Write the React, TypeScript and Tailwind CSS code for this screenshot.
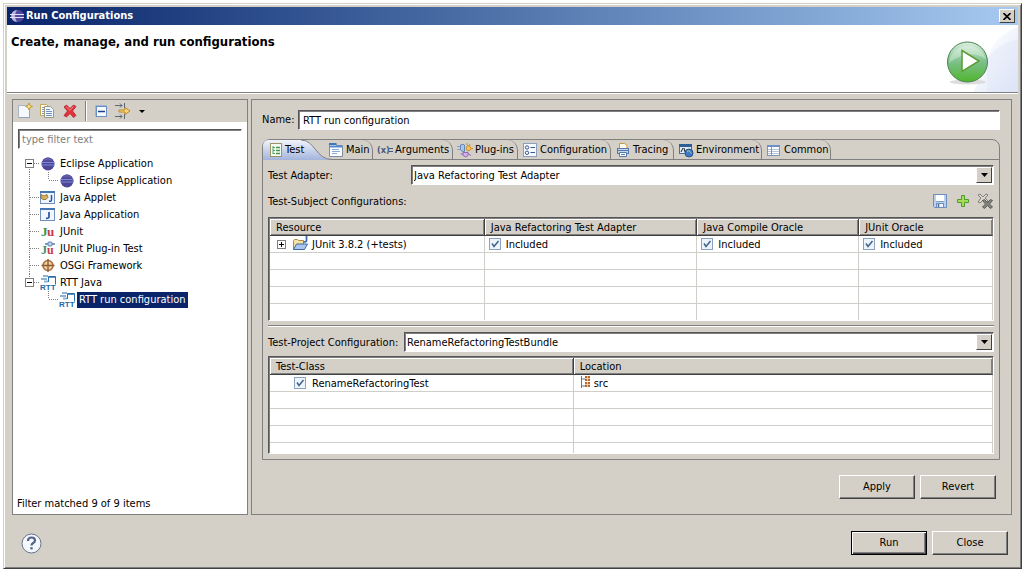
import { useState, type ReactNode } from "react";
import clsx from "clsx";

function Icon({ children }: { children: ReactNode }) {
  return (
    <svg width="16" height="16" viewBox="0 0 16 16" className="shrink-0" aria-hidden="true">
      {children}
    </svg>
  );
}

/* ---------- toolbar icons ---------- */

const NewIcon = () => (
  <Icon>
    <path d="M1.500 2.500h8l3 3v9h-11z" fill="#f4f8fd" stroke="#a8b4c4" />
    <path d="M2 14.500h10.500v-7" fill="none" stroke="#8fa3bd" />
    <path d="M12 0l1 2.500 2.500 1-2.500 1L12 7l-1-2.500-2.500-1 2.500-1z" fill="#fbe38a" stroke="#b98a1e" strokeWidth=".8" />
  </Icon>
);

const DuplicateIcon = () => (
  <Icon>
    <path d="M1.500 1.500h6l2 2v9h-8z" fill="#fffdf2" stroke="#c3a755" />
    <path d="M3 4.500h2M3 6.500h2M3 8.500h2M3 10.500h2" stroke="#7e9cc8" />
    <path d="M5.500 3.500h6l3 3v8h-9z" fill="#f3f7ff" stroke="#9a9a80" />
    <path d="M7 6.500h4M7 8.500h6M7 10.500h6M7 12.500h6" stroke="#6f93c9" />
  </Icon>
);

const DeleteIcon = () => (
  <Icon>
    <path d="M2 4l2.500-2L8 5.500 11.500 2 14 3.500 10.500 8l3.500 4.500-2.500 2L8 10.500 4.500 14 2 12.500 5.500 8z" fill="#e2323c" stroke="#b5202b" strokeWidth=".8" />
    <path d="M4 3.500L8 7.300l3.500-3.800" fill="none" stroke="#f58b8b" />
  </Icon>
);

const CollapseIcon = () => (
  <Icon>
    <path d="M2.500 13.500v-11h11" fill="none" stroke="#9db5d8" />
    <rect x="3.500" y="3.500" width="10" height="10" fill="#f6faff" stroke="#6b8fc4" />
    <path d="M5 8.500h7" stroke="#1f3f86" strokeWidth="1.500" />
  </Icon>
);

const FilterIcon = () => (
  <Icon>
    <path d="M0 2.500h7M0 13.500h7M5 .5l2 2-2 2M5 11.500l2 2-2 2" fill="none" stroke="#5c6670" />
    <path d="M9.500 0v5M9.500 11v5" stroke="#5c6670" />
    <path d="M4 7h6V4.500l5 3.500-5 3.500V9H4z" fill="#fbd77c" stroke="#c08a22" />
  </Icon>
);

const SaveIcon = () => (
  <Icon>
    <path d="M1.500 1.500h13v13h-12l-1-1z" fill="#b9cfeb" stroke="#6d8fbd" />
    <rect x="4" y="2" width="8" height="6" fill="#fff" />
    <path d="M4 8.500h8" stroke="#7f9cc6" />
    <rect x="4.500" y="10.500" width="7" height="4" fill="#eef3fa" stroke="#6d8fbd" />
    <path d="M6.500 11v3" stroke="#4c6b98" strokeWidth="1.500" />
  </Icon>
);

const AddIcon = () => (
  <Icon>
    <path d="M6.500 2.500h3v4h4v3h-4v4h-3v-4h-4v-3h4z" fill="#a5dc5a" stroke="#4f9a2b" />
  </Icon>
);

const RemoveAllIcon = () => (
  <Icon>
    <path d="M1 2l2-1 3 3 3-3 2 1-3 3 3 3-2 2-3-3-3 3-2-1 3-4z" fill="#dcd9d2" stroke="#77756f" strokeWidth=".9" />
    <path d="M5.500 7.500l2-1 3 3 3-3 2 1-3 3.500 3 3-2 1.500-3-3-3 3-2-1.500 3-3z" fill="#85837d" stroke="#55534e" strokeWidth=".9" />
  </Icon>
);

/* ---------- tree icons ---------- */

const EclipseIcon = () => (
  <Icon>
    <circle cx="8" cy="8" r="6.500" fill="#4d4596" />
    <path d="M1.500 6.500h13M1.500 9h13" stroke="#8494dc" strokeWidth=".9" />
    <path d="M2.500 4.500a6.500 6.500 0 0 1 11 0z" fill="#625aa6" />
  </Icon>
);

const AppletIcon = () => (
  <Icon>
    <rect x=".5" y="1.500" width="14" height="12" fill="#eef5ff" stroke="#7190bd" />
    <path d="M0 2h15" stroke="#4475b4" strokeWidth="2" />
    <path d="M1 4.500l3 1.500 3-1.500 1 3-2 2H3L1 8z" fill="#d8b35a" stroke="#86652a" strokeWidth=".8" />
    <path d="M11.500 5v5q0 1.500-2.500 1.300" fill="none" stroke="#28559b" strokeWidth="1.500" />
  </Icon>
);

const JavaAppIcon = () => (
  <Icon>
    <rect x=".5" y="1.500" width="14" height="12" fill="#f2f7ff" stroke="#7190bd" />
    <path d="M0 2h15" stroke="#4475b4" strokeWidth="2" />
    <path d="M9 5v5q0 1.500-3 1.300" fill="none" stroke="#28559b" strokeWidth="1.700" />
  </Icon>
);

const JUnitIcon = () => (
  <Icon>
    <text x="1" y="12" fontSize="13" fontWeight="bold" fontFamily="Liberation Serif, serif" fill="#3c8f55">J</text>
    <text x="7" y="12" fontSize="13" fontWeight="bold" fontFamily="Liberation Serif, serif" fill="#c8384c">u</text>
  </Icon>
);

const JUnitPluginIcon = () => (
  <Icon>
    <text x="1" y="13" fontSize="12" fontWeight="bold" fontFamily="Liberation Serif, serif" fill="#3c8f55">J</text>
    <text x="7" y="13" fontSize="12" fontWeight="bold" fontFamily="Liberation Serif, serif" fill="#c8384c">u</text>
    <path d="M5 3h3M12 3h3" stroke="#5a7fb0" strokeWidth="1.500" />
    <rect x="8" y="1" width="4" height="4" rx="1" fill="#c3d5ea" stroke="#5a7fb0" />
  </Icon>
);

const OsgiIcon = () => (
  <Icon>
    <circle cx="8" cy="7.500" r="5" fill="#f3cfa0" stroke="#a86f3c" strokeWidth="1.500" />
    <path d="M8 1v13M1.500 7.500h13" stroke="#8a5a30" strokeWidth="1.300" />
  </Icon>
);

const RttIcon = () => (
  <Icon>
    <path d="M3 1h5M1 4h6M4 6.500h4" stroke="#8db2d6" strokeWidth="2" />
    <path d="M8.500 7V1.500h7v8" fill="#fff" stroke="#2a6ea8" />
    <path d="M9 2h6" stroke="#2a6ea8" strokeWidth="1.500" />
    <text x="0" y="15" fontSize="8" fontWeight="bold" fontFamily="Liberation Sans, sans-serif" fill="#1d6aa8">RTT</text>
  </Icon>
);

/* ---------- tab icons ---------- */

const TestIcon = () => (
  <Icon>
    <rect x="2.500" y="1.500" width="11" height="13" fill="#f7fbf1" stroke="#9b9465" />
    <path d="M5 4v8M5 5.500h2M5 8.500h2M5 11.500h2" stroke="#51a262" />
    <path d="M8 5.500h4M8 8.500h4M8 11.500h4" stroke="#3f9c54" strokeWidth="1.500" />
  </Icon>
);

const MainIcon = () => (
  <Icon>
    <path d="M1.500 14.500v-13h7v2h6v11z" fill="#fbfdff" stroke="#7c8da8" />
    <path d="M1 2h7" stroke="#3f76b8" strokeWidth="2" />
    <path d="M2 4.500h12" stroke="#4f8ad0" strokeWidth="2" />
    <path d="M4 7.500h7M4 9.500h8M4 11.500h5" stroke="#8aa9d2" />
  </Icon>
);

const ArgumentsIcon = () => (
  <Icon>
    <text x="0" y="11" fontSize="9" fontWeight="bold" fontFamily="DejaVu Sans Condensed, sans-serif" fill="#45597a">(x)</text>
    <path d="M12 6.500h4M12 9.500h4" stroke="#45597a" />
  </Icon>
);

const PluginsIcon = () => (
  <Icon>
    <path d="M0 4.500h4M0 7.500h4" stroke="#7da2d4" />
    <path d="M3.500 3q3-1.500 4 0v6.500q-3 0-4-1.500z" fill="#aac6e8" stroke="#6288bb" />
    <path d="M10.500 3.500q3 0 3.500 3-.5 2.500-3.500 2.500l-1.500-3z" fill="#f6c65a" stroke="#c98c28" />
    <path d="M10 1v2M13 2l-1 2M14 6.500h2" stroke="#c98c28" />
    <path d="M6 10.500h5v3l-2 1.500-3-1.500zM3.500 12H6M11 11.500l3 2" fill="#d5b3e6" stroke="#8f66b8" />
  </Icon>
);

const ConfigurationIcon = () => (
  <Icon>
    <rect x="1.500" y="1.500" width="13" height="13" fill="#f6f9ff" stroke="#8d9fc0" />
    <circle cx="5" cy="5.500" r="1.700" fill="none" stroke="#3c5890" />
    <circle cx="5" cy="10.800" r="1.700" fill="none" stroke="#3c5890" />
    <path d="M8.500 5.500H13M8.500 10.500H13" stroke="#3c5890" />
  </Icon>
);

const TracingIcon = () => (
  <Icon>
    <path d="M4.500 7V1.500h5l2.500 2V7" fill="#fffaea" stroke="#c9973c" />
    <rect x="2.500" y="6.500" width="11" height="5" fill="#c5d7ee" stroke="#5679ab" />
    <path d="M4.500 10.500h7v4h-7z" fill="#fff" stroke="#5679ab" />
    <path d="M6 12.500h4M3 8.500h10" stroke="#5679ab" />
  </Icon>
);

const EnvironmentIcon = () => (
  <Icon>
    <rect x="1.500" y="2.500" width="12" height="9" fill="#dce9f7" stroke="#456c9d" />
    <path d="M1 3.500h13" stroke="#2f5d96" strokeWidth="3" />
    <path d="M3 10l2-4M6 6l1 4" stroke="#222" />
    <circle cx="11" cy="11" r="4" fill="#3f7ac4" stroke="#27508c" />
    <path d="M9 9.500q2-1.500 3 0t1.500 2" fill="none" stroke="#a9d08a" />
  </Icon>
);

const CommonIcon = () => (
  <Icon>
    <rect x="1.500" y="3.500" width="12" height="10" fill="#fff" stroke="#7d93b8" />
    <path d="M1 4h13" stroke="#6c91c9" strokeWidth="2" />
    <path d="M2 7.500h11M2 9.500h11M2 11.500h11" stroke="#b3c3dc" />
    <path d="M5.500 5v8" stroke="#7d93b8" />
  </Icon>
);

/* ---------- table icons ---------- */

const ProjectIcon = () => (
  <Icon>
    <path d="M1.500 13.500v-9l1-1h3l1 1h5v4" fill="#f8dfa2" stroke="#b08c42" />
    <path d="M1.500 13.500l3-5.500h11l-3 5.500z" fill="#a9c7ef" stroke="#41699f" />
    <path d="M14.500 0v4.500q0 1.500-3 1.500" fill="none" stroke="#3a6ba8" strokeWidth="1.700" />
  </Icon>
);

const SourceFolderIcon = () => (
  <svg width="12" height="16" viewBox="0 0 12 16" className="shrink-0" aria-hidden="true">
    <path d="M1.500 1v12M1 4h4M1 11h4" stroke="#66788c" fill="none" />
    <rect x="5" y="1" width="5" height="5" fill="#b56a2a" />
    <rect x="5" y="7" width="5" height="5" fill="#b56a2a" />
    <path d="M5 3.500h5M7.500 1v5M5 9.500h5M7.500 7v5" stroke="#f7dcb6" strokeWidth=".8" />
  </svg>
);

function Expander({ open, label, onClick }: { open: boolean; label: string; onClick?: () => void }) {
  return (
    <button aria-label={label} aria-expanded={open} onClick={onClick} className="block size-[9px] shrink-0 border border-[#808080] bg-white">
      <svg width="7" height="7" viewBox="0 0 7 7" aria-hidden="true">
        <path d={open ? "M1 3.500h5" : "M1 3.500h5M3.500 1v5"} stroke="#000" />
      </svg>
    </button>
  );
}

type TreeItem = { label: string; icon: () => ReactNode; children?: TreeItem[] };

const tree: TreeItem[] = [
  { label: "Eclipse Application", icon: EclipseIcon, children: [{ label: "Eclipse Application", icon: EclipseIcon }] },
  { label: "Java Applet", icon: AppletIcon },
  { label: "Java Application", icon: JavaAppIcon },
  { label: "JUnit", icon: JUnitIcon },
  { label: "JUnit Plug-in Test", icon: JUnitPluginIcon },
  { label: "OSGi Framework", icon: OsgiIcon },
  { label: "RTT Java", icon: RttIcon, children: [{ label: "RTT run configuration", icon: RttIcon }] },
];

function TreeLines({ d, wide }: { d: string; wide?: boolean }) {
  return (
    <svg width={wide ? 40 : 21} height="17" className="shrink-0" aria-hidden="true">
      <path d={d} fill="none" stroke="#808080" strokeDasharray="1 1" />
    </svg>
  );
}

function TreeLabel({ item, selected }: { item: TreeItem; selected?: boolean }) {
  return (
    <>
      <item.icon />
      <span className={clsx("ml-[2px] px-[2px] leading-4", selected && "bg-[#0a246a] text-white")}>{item.label}</span>
    </>
  );
}

function ConfigTree() {
  const [closed, setClosed] = useState<string[]>([]);
  const toggle = (label: string) =>
    setClosed(closed.includes(label) ? closed.filter((c) => c !== label) : [...closed, label]);

  return (
    <ul className="mt-[6px] ml-[6px]">
      {tree.map((item, i) => {
        const first = i === 0;
        const last = i === tree.length - 1;
        const open = !closed.includes(item.label);
        return (
          <li key={item.label}>
            <div className="relative flex h-[17px] items-center whitespace-nowrap">
              <TreeLines d={`M10.500 ${first ? 8 : 0}V${last ? 8 : 17}M11 8.500H21`} />
              <TreeLabel item={item} />
              {item.children && (
                <span className="absolute top-1 left-[6px]">
                  <Expander open={open} label={item.label} onClick={() => toggle(item.label)} />
                </span>
              )}
            </div>
            {item.children && open && (
              <ul>
                {item.children.map((child) => (
                  <li key={child.label} className="flex h-[17px] items-center whitespace-nowrap">
                    <TreeLines wide d={`${last ? "" : "M10.500 0V17"}M29.500 0V8M30 8.500H40`} />
                    <TreeLabel item={child} selected={last} />
                  </li>
                ))}
              </ul>
            )}
          </li>
        );
      })}
    </ul>
  );
}

const sunken = "border border-t-[#555] border-l-[#555] border-r-white border-b-white shadow-[inset_1px_1px_0_#808080]";

function ComboBox({ id, value, className }: { id: string; value: string; className: string }) {
  return (
    <div className={clsx("relative flex h-5 bg-white", sunken, className)}>
      <select id={id} className="w-full appearance-none bg-transparent pt-[2px] pr-5 pl-[2px] outline-none">
        <option>{value}</option>
      </select>
      <span className="pointer-events-none absolute top-px right-px flex h-4 w-4 items-center justify-center border border-t-white border-l-white border-r-[#404040] border-b-[#404040] bg-[#d4d0c8]">
        <svg width="7" height="4" aria-hidden="true">
          <path d="M0 0h7L3.500 4z" />
        </svg>
      </span>
    </div>
  );
}

function Check({ label }: { label: string }) {
  return (
    <span className="relative block size-3 shrink-0">
      <input type="checkbox" defaultChecked aria-label={label} className="peer block size-3 appearance-none border border-[#8aa2bd] bg-[#eef4fb]" />
      <svg width="12" height="12" className="pointer-events-none absolute inset-0 hidden peer-checked:block" aria-hidden="true">
        <path d="M3 5.500l2 3 4.500-5.500" fill="none" stroke="#3f628c" strokeWidth="1.500" />
      </svg>
    </span>
  );
}

function Button({ children, primary }: { children: ReactNode; primary?: boolean }) {
  return (
    <button
      className={clsx(
        "h-6 w-[76px] border bg-[#d4d0c8]",
        primary
          ? "border-black shadow-[inset_1px_1px_0_#fff,inset_-1px_-1px_0_#404040,inset_-2px_-2px_0_#808080]"
          : "border-t-white border-l-white border-r-[#404040] border-b-[#404040] shadow-[inset_-1px_-1px_0_#808080]"
      )}
    >
      {children}
    </button>
  );
}

const th =
  "h-[17px] border-r border-r-[#404040] border-b border-b-[#404040] bg-[#d4d0c8] pt-px pb-0 pl-[6px] text-left leading-[15px] font-normal shadow-[inset_1px_1px_0_#fff,inset_-1px_-1px_0_#808080] last:border-r-[#808080]";
const td = "h-[17px] border-r border-b border-[#d0cec8] p-0";

function EmptyRows({ cols, lastHeight }: { cols: number; lastHeight: string }) {
  return (
    <>
      {[0, 1, 2, 3].map((row) => (
        <tr key={row}>
          {Array.from({ length: cols }, (_, c) => (
            <td key={c} className={row === 3 ? `border-r border-[#d0cec8] p-0 ${lastHeight}` : td} />
          ))}
        </tr>
      ))}
    </>
  );
}

function SubjectTable() {
  const oracles = ["Java Refactoring Test Adapter", "Java Compile Oracle", "JUnit Oracle"];
  return (
    <div className={clsx("bg-white pt-px pl-px", sunken)}>
      <table className="w-full table-fixed border-separate border-spacing-0 whitespace-nowrap">
        <colgroup>
          <col className="w-[29.7%]" />
          <col className="w-[29.4%]" />
          <col className="w-[22.4%]" />
          <col />
        </colgroup>
        <thead>
          <tr>
            <th className={th}>Resource</th>
            {oracles.map((o) => (
              <th key={o} className={th}>{o}</th>
            ))}
          </tr>
        </thead>
        <tbody>
          <tr>
            <td className={td}>
              <div className="flex h-4 items-center pl-[7px]">
                <Expander open={false} label="JUnit 3.8.2" />
                <span className="mr-1 ml-[6px]">
                  <ProjectIcon />
                </span>
                <span className="pt-[2px]">JUnit 3.8.2 (+tests)</span>
              </div>
            </td>
            {oracles.map((o) => (
              <td key={o} className={td}>
                <div className="flex h-4 items-center gap-[5px] pl-1">
                  <Check label={o} />
                  <span className="pt-[2px]">Included</span>
                </div>
              </td>
            ))}
          </tr>
          <EmptyRows cols={4} lastHeight="h-4" />
        </tbody>
      </table>
    </div>
  );
}

function ClassTable() {
  return (
    <div className={clsx("bg-white pt-px pl-px", sunken)}>
      <table className="w-full table-fixed border-separate border-spacing-0 whitespace-nowrap">
        <colgroup>
          <col className="w-[42%]" />
          <col />
        </colgroup>
        <thead>
          <tr>
            <th className={th}>Test-Class</th>
            <th className={th}>Location</th>
          </tr>
        </thead>
        <tbody>
          <tr>
            <td className={td}>
              <div className="flex h-4 items-center gap-[6px] pl-6">
                <Check label="RenameRefactoringTest" />
                <span className="pt-[2px]">RenameRefactoringTest</span>
              </div>
            </td>
            <td className={td}>
              <div className="flex h-4 items-center gap-[2px] pl-[6px]">
                <SourceFolderIcon />
                <span className="pt-[2px]">src</span>
              </div>
            </td>
          </tr>
          <EmptyRows cols={2} lastHeight="h-[10px]" />
        </tbody>
      </table>
    </div>
  );
}

const tabs = [
  { label: "Main", icon: MainIcon, width: "w-[49px]" },
  { label: "Arguments", icon: ArgumentsIcon, width: "w-20" },
  { label: "Plug-ins", icon: PluginsIcon, width: "w-[65px]" },
  { label: "Configuration", icon: ConfigurationIcon, width: "w-[93px]" },
  { label: "Tracing", icon: TracingIcon, width: "w-[63px]" },
  { label: "Environment", icon: EnvironmentIcon, width: "w-[88px]" },
  { label: "Common", icon: CommonIcon, width: "w-[69px]" },
];

function TabStrip() {
  return (
    <div role="tablist" className="flex h-5 border-b border-[#808080] whitespace-nowrap">
      <button role="tab" aria-selected="true" className="relative -mb-px flex w-[61px] shrink-0 items-center gap-px pl-[5px]">
        <svg width="72" height="20" className="absolute top-0 left-0" aria-hidden="true">
          <defs>
            <linearGradient id="tabfill" x1="0" y1="0" x2="0" y2="1">
              <stop offset="0" stopColor="#f2f4fa" />
              <stop offset="1" stopColor="#a3b4dc" />
            </linearGradient>
          </defs>
          <path d="M0 20V5Q1 0 6 0H38C52 0 53 19.500 69 19.500V20z" fill="url(#tabfill)" />
          <path d="M38 0C52 0 53 19.500 69 19.500" fill="none" stroke="#808080" />
        </svg>
        <span className="relative">
          <TestIcon />
        </span>
        <span className="relative">Test</span>
      </button>
      {tabs.map((t) => (
        <button
          key={t.label}
          role="tab"
          aria-selected="false"
          className={clsx("relative flex shrink-0 items-center gap-[2px] rounded-tr-[10px] border-r border-[#808080] pt-px pl-1", t.width)}
        >
          <t.icon />
          {t.label}
        </button>
      ))}
    </div>
  );
}

function HeaderArt() {
  return (
    <svg width="75" height="67" className="shrink-0" aria-hidden="true">
      <defs>
        <linearGradient id="corner" x1="0" y1="0" x2="1" y2="1">
          <stop offset="0.200" stopColor="#fff" />
          <stop offset="1" stopColor="#dbe3f7" />
        </linearGradient>
        <linearGradient id="ball" x1="0" y1="0" x2="0" y2="1">
          <stop offset="0" stopColor="#d9efdd" />
          <stop offset="0.500" stopColor="#7cc08a" />
          <stop offset="1" stopColor="#4fb52c" />
        </linearGradient>
      </defs>
      <path d="M75 2Q52 10 46 30T30 67H75z" fill="url(#corner)" />
      <path d="M75 14Q55 18 44 34V67H75z" fill="#dfe6f8" opacity=".4" />
      <ellipse cx="25" cy="57" rx="18" ry="2.500" fill="#dcdcdc" />
      <circle cx="24.500" cy="37" r="20" fill="url(#ball)" stroke="#4d8456" />
      <path d="M6 38Q25 23 43 34A19 19 0 0 0 6 38z" fill="#fff" opacity=".3" />
      <path d="M19 25.500L36 36 19 46.500z" fill="#fff" stroke="#5d9b35" strokeWidth="1.500" />
    </svg>
  );
}

export default function App() {
  return (
    <div className="flex min-h-screen flex-col bg-white p-[3px] font-['DejaVu_Sans_Condensed','DejaVu_Sans',sans-serif] text-[11px] leading-4 text-black">
      <div className="flex flex-1 flex-col border border-t-[#d4d0c8] border-l-[#d4d0c8] border-r-[#404040] border-b-[#404040] bg-[#d4d0c8] p-[3px] shadow-[inset_1px_1px_0_#fff,inset_-1px_-1px_0_#808080]">
        <div className="flex h-[18px] items-center justify-between bg-linear-to-r from-[#0a246a] to-[#a6caf0] pr-[3px] pl-[2px]">
          <div className="flex items-center gap-px text-white">
            <Icon>
              <circle cx="9" cy="8" r="6" fill="#52479b" />
              <path d="M8 2a6 6 0 0 0 0 12Q4 8 8 2z" fill="#b9b3dc" />
              <path d="M1 6.500h14M1 9.500h14" stroke="#dfe3fa" />
            </Icon>
            <h1 className="font-bold">Run Configurations</h1>
          </div>
          <button aria-label="Close window" className="flex h-[14px] w-4 items-center justify-center border border-t-white border-l-white border-r-[#404040] border-b-[#404040] bg-[#d4d0c8]">
            <svg width="8" height="7" aria-hidden="true">
              <path d="M.5 0l7 7M7.500 0l-7 7" stroke="#000" strokeWidth="1.600" />
            </svg>
          </button>
        </div>

        <header className="flex h-[68px] justify-between border-b border-[#808080] bg-white pl-1">
          <h2 className="mt-[9px] text-[13px] font-bold">Create, manage, and run configurations</h2>
          <HeaderArt />
        </header>

        <div className="flex flex-1 flex-col border-t border-white pt-[5px] pr-[6px] pl-[5px]">
          <main className="flex flex-1 gap-[3px]">
            <section className="flex w-[236px] shrink-0 flex-col border border-[#808080] bg-white">
              <div className="flex h-[22px] items-center bg-[#d4d0c8] pl-1">
                <button aria-label="New launch configuration" className="mr-[6px]"><NewIcon /></button>
                <button aria-label="Duplicate" className="mr-[7px]"><DuplicateIcon /></button>
                <button aria-label="Delete" className="mr-[7px]"><DeleteIcon /></button>
                <span className="h-5 border-l border-l-[#808080] border-r border-r-white" />
                <button aria-label="Collapse all" className="ml-[6px]"><CollapseIcon /></button>
                <button aria-label="Filter" className="ml-[6px] flex items-center gap-2">
                  <FilterIcon />
                  <svg width="6" height="3" aria-hidden="true">
                    <path d="M0 0h6L3 3z" />
                  </svg>
                </button>
              </div>
              <input
                type="text"
                aria-label="Filter"
                placeholder="type filter text"
                className={clsx("mx-[5px] mt-[7px] h-5 bg-white px-[3px] outline-none placeholder:text-[#808080]", sunken, "border-r-[#d4d0c8] border-b-[#d4d0c8]")}
              />
              <ConfigTree />
              <p className="mt-auto mb-[2px] ml-1">Filter matched 9 of 9 items</p>
            </section>

            <section className="flex min-w-0 flex-1 flex-col border border-[#808080] pr-[11px] pb-[15px] pl-[10px]">
              <div className="mt-[10px] flex items-center">
                <label htmlFor="name" className="w-9">Name:</label>
                <input id="name" type="text" defaultValue="RTT run configuration" className={clsx("h-5 min-w-0 flex-1 bg-white px-1 pt-px outline-none", sunken)} />
              </div>

              <div className="mt-[9px] rounded-t-lg border border-[#808080]">
                <TabStrip />
                <div className="px-[5px] pb-[5px]">
                  <div className="mt-[5px] flex items-center">
                    <label htmlFor="adapter" className="w-[143px] shrink-0 pt-[2px]">Test Adapter:</label>
                    <ComboBox id="adapter" value="Java Refactoring Test Adapter" className="flex-1" />
                  </div>
                  <div className="mt-2 flex h-6 items-start">
                    <span className="flex-1 pt-px">Test-Subject Configurations:</span>
                    <button aria-label="Save" className="mr-[7px]"><SaveIcon /></button>
                    <button aria-label="Add" className="mr-[6px]"><AddIcon /></button>
                    <button aria-label="Remove" className="mr-px"><RemoveAllIcon /></button>
                  </div>
                  <SubjectTable />
                  <hr className="mt-1 mb-[5px] border-t border-b border-t-[#808080] border-b-white" />
                  <div className="mb-1 flex items-center">
                    <label htmlFor="project" className="w-[136px] shrink-0 pt-[2px] whitespace-nowrap">Test-Project Configuration:</label>
                    <ComboBox id="project" value="RenameRefactoringTestBundle" className="flex-1" />
                  </div>
                  <ClassTable />
                </div>
              </div>

              <div className="mt-auto flex justify-end gap-[5px] pr-1">
                <Button>Apply</Button>
                <Button>Revert</Button>
              </div>
            </section>
          </main>

          <footer className="mt-4 mb-[10px] flex items-center justify-between pr-1 pl-[9px]">
            <button aria-label="Help">
              <svg width="21" height="21" viewBox="0 0 21 21" aria-hidden="true">
                <circle cx="10.500" cy="10.500" r="9.500" fill="#f4f7fb" stroke="#66758f" />
                <path d="M7 8q0-3.500 3.500-3.500T14 7.500q0 1.500-1.800 2.500-1.700 1-1.700 2.500" fill="none" stroke="#52648a" strokeWidth="2.200" />
                <path d="M9.300 14.200h2.400v2.200H9.300z" fill="#52648a" />
              </svg>
            </button>
            <div className="flex gap-[5px]">
              <Button primary>Run</Button>
              <Button>Close</Button>
            </div>
          </footer>
        </div>
      </div>
    </div>
  );
}
